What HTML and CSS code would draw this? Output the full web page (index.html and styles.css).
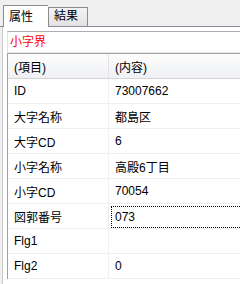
FILE: index.html
```html
<!DOCTYPE html>
<html lang="ja">
<head>
    <meta charset="UTF-8">
    <title>属性</title>
    <link rel="stylesheet" href="styles.css">
</head>
<body>
    <div class="tabs">
        <div class="tab active">属性</div>
        <div class="tab">結果</div>
    </div>

    <div class="page">
        <div class="title">小字界</div>

        <div class="grid">
            <div class="row head">
                <div class="cell key">(項目)</div>
                <div class="cell val">(内容)</div>
            </div>
            <div class="row">
                <div class="cell key">ID</div>
                <div class="cell val">73007662</div>
            </div>
            <div class="row">
                <div class="cell key">大字名称</div>
                <div class="cell val">都島区</div>
            </div>
            <div class="row">
                <div class="cell key">大字CD</div>
                <div class="cell val">6</div>
            </div>
            <div class="row">
                <div class="cell key">小字名称</div>
                <div class="cell val">高殿6丁目</div>
            </div>
            <div class="row">
                <div class="cell key">小字CD</div>
                <div class="cell val">70054</div>
            </div>
            <div class="row">
                <div class="cell key">図郭番号</div>
                <div class="cell val"><div class="focus">073</div></div>
            </div>
            <div class="row">
                <div class="cell key">Flg1</div>
                <div class="cell val"></div>
            </div>
            <div class="row">
                <div class="cell key">Flg2</div>
                <div class="cell val">0</div>
            </div>
        </div>
    </div>
</body>
</html>
```

FILE: styles.css
```css
body {
    margin: 0;
    background: #f0f0f0;
    font-family: "Liberation Sans", "Noto Sans CJK JP", sans-serif;
    font-size: 12px;
    color: #000;
    overflow: hidden;
}

.tabs {
    display: flex;
    align-items: flex-end;
    height: 26px;
    padding-left: 3px;
    border-bottom: 1px solid #898c95;
}

.tab {
    height: 18px;
    line-height: 17px;
    padding: 0 5px;
    width: 28px;
    border: 1px solid #898c95;
    border-bottom: none;
    background: linear-gradient(#f3f3f3, #e2e2e2);
}

.tab.active {
    position: relative;
    height: 21px;
    line-height: 22px;
    width: 34px;
    margin-bottom: -1px;
    padding: 0 5px;
    background: #fff;
    border-right: none;
}

.page {
    margin-left: 2px;
    border-left: 1px solid #c9c9c9;
    background: #fff;
    padding: 4px 0 0 4px;
    height: 260px;
}

.title {
    height: 20px;
    line-height: 20px;
    padding-left: 2px;
    color: #ff0000;
    border: 1px solid #e3e9ef;
    border-top-color: #abadb3;
    border-left-color: #e2e3ea;
    border-right: none;
}

.grid {
    border-top: 1px solid #a0a0a0;
    border-left: 1px solid #a0a0a0;
}

.row {
    display: flex;
    height: 24px;
    border-bottom: 1px solid #f0f0f0;
}

.row.head {
    background: linear-gradient(#fdfdfd, #eff1f4);
    border-bottom-color: #d5d5d5;
}

.cell {
    display: flex;
    align-items: center;
    padding-left: 6px;
}

.key {
    width: 94px;
    border-right: 1px solid #f0f0f0;
}

.head .key {
    border-right-color: #e3e3e3;
}

.val {
    flex: 1;
}

.focus {
    flex: 1;
    align-self: stretch;
    display: flex;
    align-items: center;
    margin: 2px 0 0 -4px;
    padding-left: 3px;
    border: 1px dotted #000;
    border-right: none;
}
```
